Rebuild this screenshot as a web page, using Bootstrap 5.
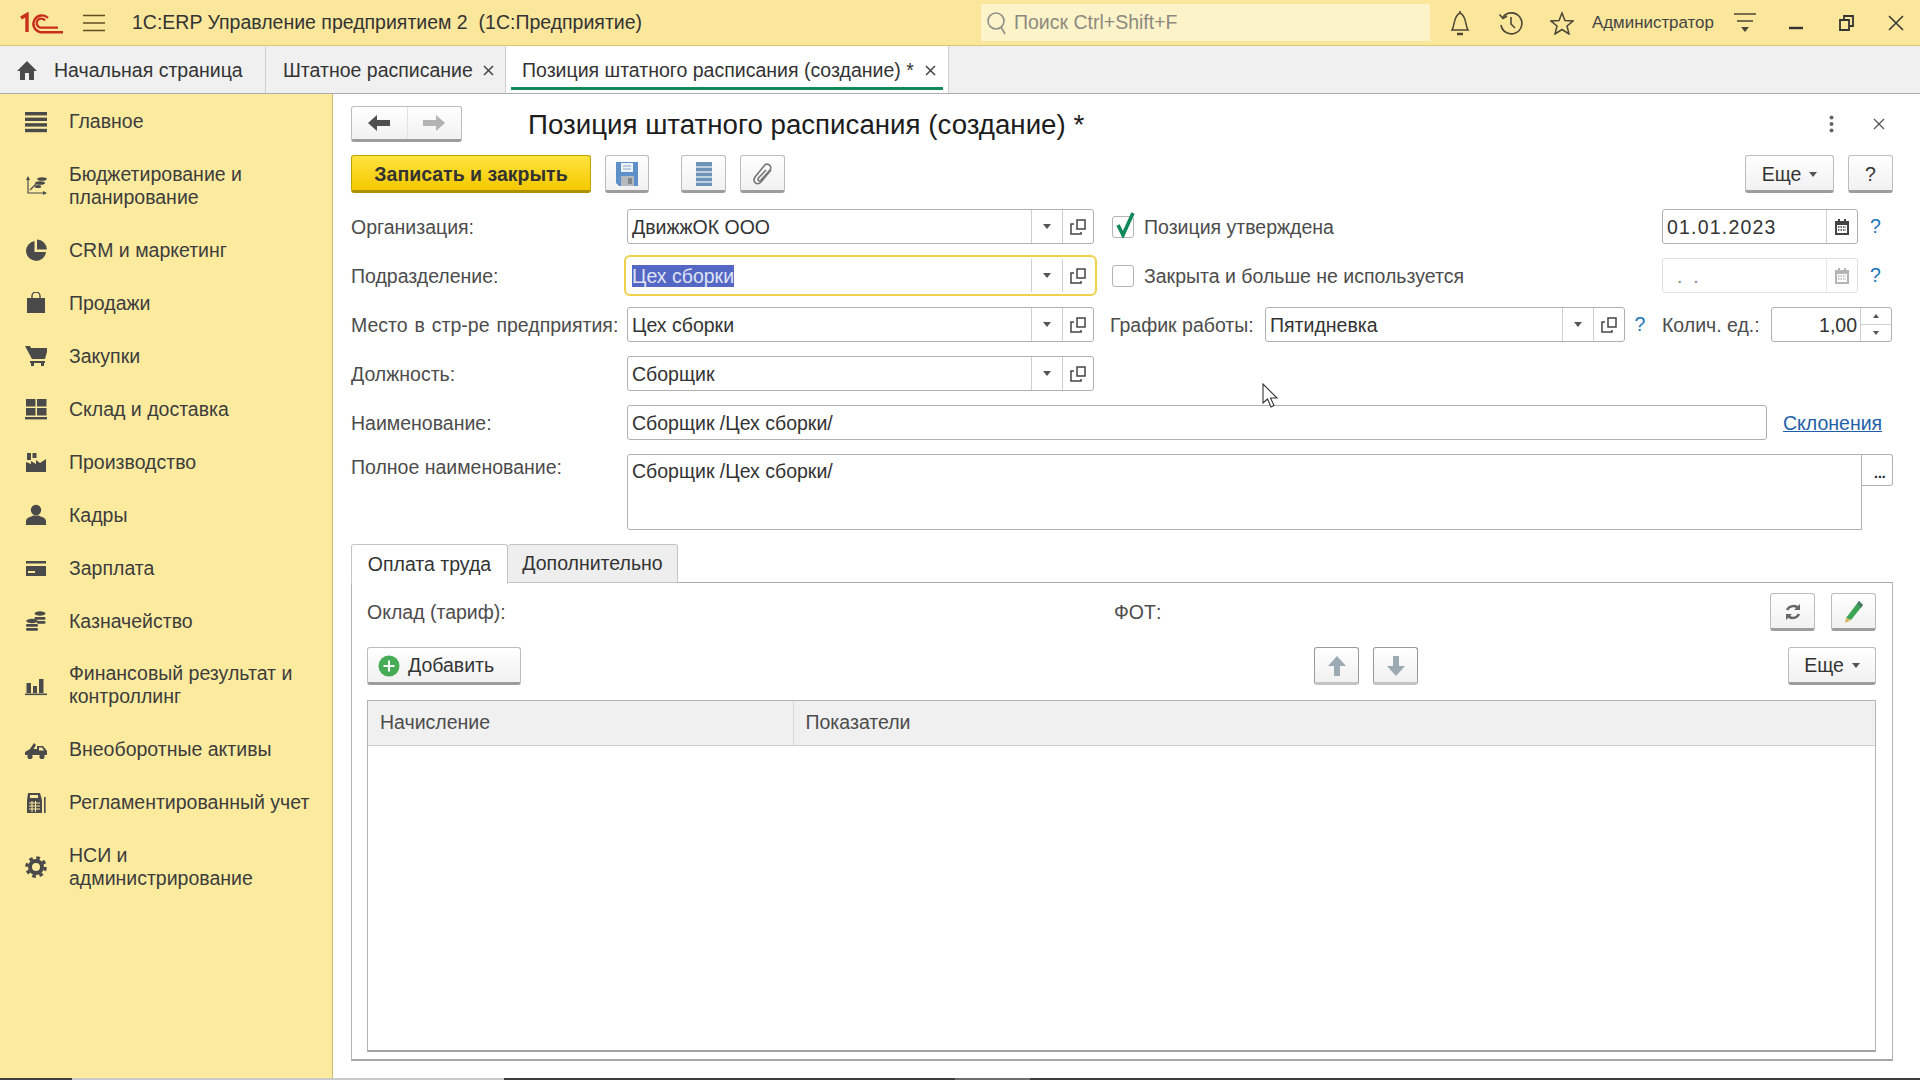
<!DOCTYPE html>
<html lang="ru">
<head>
    <meta charset="UTF-8">
    <title>Позиция штатного расписания</title>
    <link href="https://cdn.jsdelivr.net/npm/bootstrap@5.3.0/dist/css/bootstrap.min.css" rel="stylesheet">
    <style>
        html, body { height: 100%; }
        body { font-family: "Liberation Sans", Arial, sans-serif; font-size: 19.5px; line-height: 23px; color: #333; overflow: hidden; background: #fff; }
        svg { display: block; flex: none; }

        /* верхняя панель */
        .top-bar { height: 46px; flex: none; background: #fbe79c; border-bottom: 1px solid #dcc873; }
        .top-left { width: 981px; }
        .top-logo { margin-left: 20px; }
        .top-search { width: 449px; height: 37px; background: #fdf3c9; color: #8c8a80; padding-left: 4px; gap: 7px; }
        .top-cell { width: 51px; height: 45px; }
        .top-user { width: 132px; padding-left: 5px; font-size: 16.9px; white-space: nowrap; color: #444; }

        /* вкладки */
        .app-tabs { height: 48px; flex: none; background: #f0f0f0; border-bottom: 1px solid #ababab; }
        .app-tab { height: 47px; padding-top: 2px; color: #333; border-right: 1px solid #cfcfcf; white-space: nowrap; }
        .app-tab.active { background: #fff; position: relative; }
        .app-tab.active::after { content: ""; position: absolute; left: 5px; right: 5px; bottom: 3px; height: 3px; background: #128a5c; }
        .tab-home { width: 266px; padding-left: 17px; gap: 17px; }
        .tab-list { width: 240px; padding-left: 17px; gap: 10px; }
        .tab-form { width: 443px; padding-left: 16px; gap: 11px; }

        /* меню */
        .side { width: 333px; flex: none; background: #fceb9f; border-right: 1px solid #cdbb72; }
        .side-item { padding: 16px 8px 14px 25px; gap: 22px; color: #3c3c3c; }
        .side-item.two { padding-top: 15.5px; padding-bottom: 14px; }
        .side-item svg { width: 22px; height: 22px; }

        /* форма */
        .form-area { padding: 12px 27px 0 18px; min-width: 0; }
        .btn-1c { height: 38px; padding: 2px 0 0; font-size: 19.5px; line-height: 23px; color: #333; background: linear-gradient(#fff, #f1f1f1); border: 1px solid #bcbcbc; border-bottom: 3px solid #9d9d9d; border-radius: 3px; }
        .btn-1c:disabled { opacity: 1; color: #999; border-bottom-color: #c4c4c4; }
        .btn-main { width: 240px; font-weight: 700; background: linear-gradient(#ffe43f, #f4c800); border-color: #c4a300; border-bottom-color: #ad9000; }
        .btn-icon { width: 45px; }
        .btn-more { width: 89px; gap: 8px; }
        .nav-pair { width: 111px; height: 36px; padding: 0; }
        .nav-pair .half { width: 55px; height: 100%; }
        .nav-pair .half + .half { border-left: 1px solid #e2e2e2; }
        .form-title { margin-left: 66px; padding-top: 2px; font-size: 27.7px; line-height: 36px; color: #1c1c1c; white-space: nowrap; }
        .f-row { height: 35px; margin-top: 14px; }
        .f-label { width: 276px; flex: none; padding-top: 2px; color: #4c4c4c; white-space: nowrap; }
        .f-wide { word-spacing: 1.5px; }
        .f-text { padding-top: 2px; color: #4c4c4c; white-space: nowrap; }
        .fld { height: 35px; border: 1px solid #b0b0b0; border-radius: 3px; background: #fff; padding: 0; color: #333; font-size: 19.5px; line-height: 23px; }
        .fld .txt { flex: 1 1 auto; padding: 2px 4px 0; white-space: nowrap; overflow: hidden; }
        .fld .cell { width: 31px; flex: none; height: 100%; border-left: 1px solid #cfcfcf; }
        .w-main { width: 467px; flex: none; }
        .fld.focused { outline: 2px solid #f0d24a; outline-offset: 1px; border-color: #fff; }
        .sel { background: #5567c4; color: #dfe3f4; }
        .fld.off { border-color: #e0e0e0; color: #888; }
        .date-txt { letter-spacing: 1.2px; }
        .check { width: 22px; height: 22px; border: 1px solid #b4b4b4; border-radius: 3px; position: relative; }
        .check svg { position: absolute; left: 0; top: -7px; }
        .hint { color: #1a76b8; font-weight: 400; text-align: center; }
        .arrow-down { width: 0; height: 0; border: 4px solid transparent; border-top: 5px solid #555; border-bottom: 0; }
        .spin { width: 31px; flex: none; height: 100%; border-left: 1px solid #cfcfcf; }
        .spin div { flex: 1; border-bottom: 1px solid #cfcfcf; }
        .spin div:last-child { border-bottom: 0; }
        .link-1c { color: #1f5fa8; text-decoration: underline; padding-top: 2px; }
        .fld-memo { height: 76px; align-items: flex-start; border-top-right-radius: 0; border-bottom-right-radius: 0; }
        .fld-memo .txt { padding-top: 5px; }
        .btn-dots { width: 31px; height: 32px; background: #fff; border: 1px solid #b0b0b0; border-left: 0; border-radius: 0 3px 3px 0; font-weight: 700; font-size: 14px; line-height: 30px; padding-top: 3px; }

        /* нижняя панель вкладок */
        .page-tabs { margin-top: 14px; height: 39px; border-bottom: 1px solid #ababab; }
        .page-tab { height: 39px; border: 1px solid #c4c4c4; border-radius: 3px 3px 0 0; color: #333; padding: 0; }
        .page-tab.active { width: 157px; background: #fff; border-bottom-color: #fff; margin-bottom: -1px; height: 40px; }
        .page-tab.other { width: 170px; background: #eee; border-left: 0; }
        .panel-1c { height: 478px; padding: 9px 16px 0 15px; border: 1px solid #b4b4b4; border-top: 0; border-bottom: 2px solid #a8a8a8; }
        .row-1c { height: 39px; }
        .row-label { color: #4c4c4c; padding-top: 2px; }
        .tbl-wrap { height: 352px; margin-top: 15px; border: 1px solid #b4b4b4; border-bottom: 2px solid #a4a4a4; }
        .tbl-wrap table { table-layout: fixed; margin: 0; font-size: 19.5px; }
        .tbl-wrap th { height: 44px; background: #f0f0f0; font-weight: 400; color: #4c4c4c; padding: 0 12px; vertical-align: middle; border-bottom: 1px solid #cfcfcf; }
        .tbl-wrap th + th { border-left: 1px solid #d8d8d8; }

        .strip { height: 2px; flex: none; background: #3f3f3f; }
        .strip span { display: block; height: 2px; }
        .mouse { position: absolute; left: 1262px; top: 383px; }
    </style>
</head>
<body class="d-flex flex-column position-relative">

<header class="top-bar d-flex align-items-center">
    <div class="top-left d-flex align-items-center">
        <svg class="top-logo" width="43" height="22" viewBox="0 0 43 22" fill="none" stroke="#c9301c" stroke-width="2.4">
            <path d="M1 6 L7 2.5 V20" stroke-width="3.4"/>
            <path d="M28 6 A8.5 8.5 0 1 0 20 20.2 H43"/>
            <path d="M25 8.5 A4.6 4.6 0 1 0 20 15.6 H38"/>
        </svg>
        <svg style="margin-left:20px" width="22" height="18" viewBox="0 0 22 18" stroke="#5f4e22" stroke-width="1.6">
            <path d="M0 1.5 H22 M0 9 H22 M0 16.5 H22"/>
        </svg>
        <div style="margin-left:27px;white-space:pre">1С:ERP Управление предприятием 2  (1С:Предприятие)</div>
    </div>
    <div class="top-search d-flex align-items-center">
        <svg width="22" height="26" viewBox="0 0 22 26" fill="none" stroke="#8f8f88" stroke-width="1.6">
            <circle cx="11" cy="11" r="8"/><path d="M16 17 L20 24"/>
        </svg>
        <span>Поиск Ctrl+Shift+F</span>
    </div>
    <div class="top-cell d-flex align-items-center justify-content-center" style="margin-left:4px">
        <svg width="24" height="26" viewBox="0 0 24 26" fill="none" stroke="#4b4636" stroke-width="1.5">
            <path d="M4 20 C7 16 5 6 12 3 C19 6 17 16 20 20 Z"/><path d="M12 1 V3"/><path d="M9 24 H15" stroke-width="2.5"/>
        </svg>
    </div>
    <div class="top-cell d-flex align-items-center justify-content-center">
        <svg width="25" height="26" viewBox="0 0 25 26" fill="none" stroke="#4b4636" stroke-width="1.6">
            <path d="M5 7 A10.5 10.5 0 1 1 3 15"/><path d="M1.5 4.5 L5 8.5 L9 6"/><path d="M13 7 V14 L17 18"/>
        </svg>
    </div>
    <div class="top-cell d-flex align-items-center justify-content-center">
        <svg width="24" height="24" viewBox="0 0 24 24" fill="none" stroke="#4b4636" stroke-width="1.5">
            <path d="M12 2 L15 9.5 L23 10 L17 15 L19 23 L12 18.5 L5 23 L7 15 L1 10 L9 9.5 Z"/>
        </svg>
    </div>
    <div class="top-user">Администратор</div>
    <div class="top-cell d-flex align-items-center justify-content-center">
        <svg width="22" height="22" viewBox="0 0 22 22" fill="#4b4636" stroke="#4b4636" stroke-width="1.5">
            <path d="M0 2 H22 M3 9 H19" fill="none"/><path d="M7 15 H15 L11 20 Z" stroke="none"/>
        </svg>
    </div>
    <div class="top-cell d-flex align-items-center justify-content-center">
        <svg width="14" height="14" viewBox="0 0 14 14" stroke="#333" stroke-width="2.4"><path d="M0 12 H14"/></svg>
    </div>
    <div class="top-cell d-flex align-items-center justify-content-center">
        <svg width="15" height="16" viewBox="0 0 15 16" fill="none" stroke="#333" stroke-width="1.8">
            <path d="M1 5 H10 V15 H1 Z"/><path d="M5 4 V1 H14 V11 H11"/>
        </svg>
    </div>
    <div class="top-cell d-flex align-items-center justify-content-center" style="width:48px">
        <svg width="16" height="16" viewBox="0 0 16 16" stroke="#333" stroke-width="1.5"><path d="M1 1 L15 15 M15 1 L1 15"/></svg>
    </div>
</header>

<nav class="app-tabs d-flex">
    <a class="app-tab tab-home d-flex align-items-center text-decoration-none">
        <svg width="20" height="19" viewBox="0 0 20 19" fill="#4a4a4a"><path d="M10 0 L20 10 H17 V19 H12 V12 H8 V19 H3 V10 H0 Z"/></svg>
        <span>Начальная страница</span>
    </a>
    <a class="app-tab tab-list d-flex align-items-center text-decoration-none">
        <span>Штатное расписание</span>
        <svg width="11" height="11" viewBox="0 0 11 11" stroke="#444" stroke-width="1.5"><path d="M1 1 L10 10 M10 1 L1 10"/></svg>
    </a>
    <a class="app-tab tab-form active d-flex align-items-center text-decoration-none">
        <span>Позиция штатного расписания (создание) *</span>
        <svg width="11" height="11" viewBox="0 0 11 11" stroke="#444" stroke-width="1.5"><path d="M1 1 L10 10 M10 1 L1 10"/></svg>
    </a>
</nav>

<div class="d-flex flex-grow-1" style="min-height:0">
    <aside class="side">
        <div class="side-item d-flex align-items-center">
            <svg viewBox="0 0 22 22" fill="#4a4a4a"><rect y="1" width="22" height="3.4"/><rect y="6.6" width="22" height="3.4"/><rect y="12.2" width="22" height="3.4"/><rect y="17.8" width="22" height="3.4"/></svg>
            <span>Главное</span>
        </div>
        <div class="side-item two d-flex align-items-center">
            <svg viewBox="0 0 22 22" fill="#4a4a4a"><path d="M3 4 V18 H20" fill="none" stroke="#4a4a4a" stroke-width="1.2"/><path d="M1 5 L3 1 L5 5 Z M18 16 L22 18 L18 20 Z"/><path d="M5 15 L11 9" stroke="#4a4a4a" fill="none" stroke-width="1.2"/><ellipse cx="17" cy="4" rx="4.800" ry="1.800"/><ellipse cx="15" cy="8" rx="5" ry="1.800"/><ellipse cx="13" cy="11.500" rx="3.200" ry="1.500"/></svg>
            <span>Бюджетирование и<br>планирование</span>
        </div>
        <div class="side-item d-flex align-items-center">
            <svg viewBox="0 0 22 22" fill="#4a4a4a"><path d="M9.5 2 A10 10 0 1 0 21 13 H9.5 Z"/><path d="M12 0.5 A10 10 0 0 1 21.8 10.5 H12 Z"/></svg>
            <span>CRM и маркетинг</span>
        </div>
        <div class="side-item d-flex align-items-center">
            <svg viewBox="0 0 22 22" fill="#4a4a4a"><path d="M2 6 H20 V21 H2 Z"/><path d="M7 8 V4 A4 4 0 0 1 15 4 V8" fill="none" stroke="#4a4a4a" stroke-width="1.4"/></svg>
            <span>Продажи</span>
        </div>
        <div class="side-item d-flex align-items-center">
            <svg viewBox="0 0 22 22" fill="#4a4a4a"><path d="M0 1 H5 L6 3 H23 L20 14 H7 Z"/><rect x="5" y="16" width="15" height="2"/><rect x="6" y="18" width="3" height="3"/><rect x="16" y="18" width="3" height="3"/></svg>
            <span>Закупки</span>
        </div>
        <div class="side-item d-flex align-items-center">
            <svg viewBox="0 0 22 22" fill="#4a4a4a"><rect x="1" y="1" width="9.5" height="7.5"/><rect x="12" y="1" width="9.5" height="7.5"/><rect x="1" y="10" width="9.5" height="7.5"/><rect x="12" y="10" width="9.5" height="7.5"/><rect y="19" width="22" height="2.4"/></svg>
            <span>Склад и доставка</span>
        </div>
        <div class="side-item d-flex align-items-center">
            <svg viewBox="0 0 22 22" fill="#4a4a4a"><path d="M1 21 V11 L6 13 V10 L11 13 V9 L15 12 L21 8 V21 Z"/><rect x="2" y="2" width="4" height="7"/><rect x="7.5" y="2" width="4" height="5"/></svg>
            <span>Производство</span>
        </div>
        <div class="side-item d-flex align-items-center">
            <svg viewBox="0 0 22 22" fill="#4a4a4a"><circle cx="11" cy="6" r="5.2"/><path d="M1 21 V17 C1 13 7 13 8 11.5 H14 C15 13 21 13 21 17 V21 Z"/></svg>
            <span>Кадры</span>
        </div>
        <div class="side-item d-flex align-items-center">
            <svg viewBox="0 0 22 22" fill="#4a4a4a"><path d="M1 4 H21 V6.5 H1 Z"/><path d="M1 9 H21 V19 H1 Z M3 14 V16 H10 V14 Z"/></svg>
            <span>Зарплата</span>
        </div>
        <div class="side-item d-flex align-items-center">
            <svg viewBox="0 0 22 22" fill="#4a4a4a"><ellipse cx="15" cy="3.5" rx="5.5" ry="2.2"/><rect x="9.5" y="7" width="11" height="2.8" rx="1.2"/><rect x="12" y="11" width="8.5" height="2.8" rx="1.2"/><ellipse cx="7" cy="11" rx="5.8" ry="2.2"/><rect x="1" y="14" width="12" height="2.8" rx="1.2"/><rect x="1" y="18" width="12" height="2.8" rx="1.2"/></svg>
            <span>Казначейство</span>
        </div>
        <div class="side-item two d-flex align-items-center">
            <svg viewBox="0 0 22 22" fill="#4a4a4a"><rect x="1.5" y="9" width="4.5" height="10"/><rect x="8" y="12" width="4" height="7"/><rect x="14" y="5" width="4.5" height="14"/><rect y="19.5" width="22" height="1.6"/></svg>
            <span>Финансовый результат и<br>контроллинг</span>
        </div>
        <div class="side-item d-flex align-items-center">
            <svg viewBox="0 0 22 22" fill="#4a4a4a"><path d="M0 16 V13 L5 10 L9 4 L11 6 L8.500 10 H12 V7 H18 L22 12 V16 Z"/><path d="M14 8.500 H17 L19 11.500 H14 Z" fill="#fceb9f"/><circle cx="5" cy="17.500" r="2.600"/><circle cx="17" cy="17.500" r="2.600"/></svg>
            <span>Внеоборотные активы</span>
        </div>
        <div class="side-item d-flex align-items-center">
            <svg viewBox="0 0 22 22" fill="#4a4a4a"><path d="M2 8 L3 1 H15 L17 8 V21 H2 Z"/><rect x="5" y="3" width="8" height="3" fill="#fceb9f"/><path d="M4 11 H15 M4 14 H15 M4 17 H15 M7 9 V20 M10.5 9 V20" stroke="#fceb9f" stroke-width="1"/><rect x="19" y="5" width="1.6" height="16"/></svg>
            <span>Регламентированный учет</span>
        </div>
        <div class="side-item two d-flex align-items-center">
            <svg viewBox="0 0 22 22" fill="none" stroke="#4a4a4a"><circle cx="11" cy="11" r="6" stroke-width="4"/><circle cx="11" cy="11" r="9.2" stroke-width="3.2" stroke-dasharray="3.6 3.63"/></svg>
            <span>НСИ и<br>администрирование</span>
        </div>
    </aside>

    <main class="form-area flex-grow-1">
        <div class="d-flex align-items-center" style="height:36px">
            <div class="nav-pair btn-1c d-flex">
                <span class="half d-flex align-items-center justify-content-center">
                    <svg width="22" height="16" viewBox="0 0 22 16" fill="#4f4f4f"><path d="M9 0 V5 H22 V11 H9 V16 L0 8 Z"/></svg>
                </span>
                <span class="half d-flex align-items-center justify-content-center">
                    <svg width="22" height="16" viewBox="0 0 22 16" fill="#b3b3b3"><path d="M13 0 V5 H0 V11 H13 V16 L22 8 Z"/></svg>
                </span>
            </div>
            <h1 class="form-title mb-0 fw-normal">Позиция штатного расписания (создание) *</h1>
            <svg class="ms-auto" width="5" height="18" viewBox="0 0 5 18" fill="#666"><circle cx="2.5" cy="2.5" r="2"/><circle cx="2.5" cy="9" r="2"/><circle cx="2.5" cy="15.500" r="2"/></svg>
            <svg style="margin:0 8px 0 39px" width="12" height="12" viewBox="0 0 12 12" stroke="#555" stroke-width="1.3"><path d="M1 1 L11 11 M11 1 L1 11"/></svg>
        </div>

        <div class="d-flex align-items-start" style="margin-top:13px">
            <button class="btn btn-1c btn-main" type="button">Записать и закрыть</button>
            <button class="btn btn-1c d-flex align-items-center justify-content-center" style="width:44px;margin-left:14px" type="button">
                <svg width="22" height="24" viewBox="0 0 22 24"><path d="M0 0 H22 V24 H3 L0 21 Z" fill="#5d8fc9"/><rect x="5" y="1" width="12" height="9" fill="#eef3f8"/><path d="M7 4 H15 M7 7 H15" stroke="#8aa6c6"/><rect x="5" y="14" width="13" height="10" fill="#b4b9bd"/><rect x="12" y="16" width="4" height="6" fill="#7f868c"/></svg>
            </button>
            <button class="btn btn-1c btn-icon d-flex align-items-center justify-content-center" style="margin-left:32px" type="button">
                <svg width="16" height="24" viewBox="0 0 16 24"><rect width="16" height="24" fill="#6d93b8"/><path d="M0 5 H16 M0 10 H16 M0 15 H16 M0 20 H16" stroke="#dbe6f0" stroke-width="1.3"/></svg>
            </button>
            <button class="btn btn-1c btn-icon d-flex align-items-center justify-content-center" style="margin-left:14px" type="button">
                <svg width="22" height="24" viewBox="0 0 22 24" fill="none" stroke="#777" stroke-width="1.6"><path d="M19 8 L9 20 C5 24 0 20 3 15 L12 4 C15 0 21 4 18 8 L9 18 C7 20 5 18 6.500 16 L14 8"/></svg>
            </button>
            <button class="btn btn-1c btn-more ms-auto d-flex align-items-center justify-content-center" type="button">
                <span>Еще</span><span class="arrow-down"></span>
            </button>
            <button class="btn btn-1c btn-icon" style="margin-left:14px" type="button">?</button>
        </div>

        <div class="f-row d-flex align-items-center" style="margin-top:16px">
            <div class="f-label">Организация:</div>
            <div class="fld w-main d-flex align-items-center">
                <div class="txt">ДвижжОК ООО</div>
                <div class="cell d-flex align-items-center justify-content-center"><span class="arrow-down"></span></div>
                <div class="cell d-flex align-items-center justify-content-center"><svg width="16" height="16" viewBox="0 0 16 16" fill="none" stroke="#444" stroke-width="1.5"><path d="M7 1 H15 V10 H7 Z"/><path d="M4 5 H1 V15 H11 V13"/></svg></div>
            </div>
            <div class="check" style="margin-left:18px">
                <svg width="24" height="28" viewBox="0 0 24 28" fill="none" stroke="#10885a" stroke-width="3.6"><path d="M5 15 L10 25 L20 3"/></svg>
            </div>
            <div class="f-text" style="margin-left:10px">Позиция утверждена</div>
            <div class="fld d-flex align-items-center ms-auto" style="width:196px">
                <div class="txt date-txt">01.01.2023</div>
                <div class="cell d-flex align-items-center justify-content-center"><svg width="14" height="16" viewBox="0 0 14 16" fill="#444"><path d="M0 2 H14 V16 H0 Z M2 6 V14 H12 V6 Z"/><rect x="3" y="0" width="2" height="3"/><rect x="9" y="0" width="2" height="3"/><path d="M3 8 H11 M3 11 H11" stroke="#444" stroke-width="1.300" stroke-dasharray="1.500 1"/></svg></div>
            </div>
            <div class="hint" style="width:35px">?</div>
        </div>

        <div class="f-row d-flex align-items-center">
            <div class="f-label">Подразделение:</div>
            <div class="fld focused w-main d-flex align-items-center">
                <div class="txt"><span class="sel">Цех сборки</span></div>
                <div class="cell d-flex align-items-center justify-content-center"><span class="arrow-down"></span></div>
                <div class="cell d-flex align-items-center justify-content-center"><svg width="16" height="16" viewBox="0 0 16 16" fill="none" stroke="#444" stroke-width="1.5"><path d="M7 1 H15 V10 H7 Z"/><path d="M4 5 H1 V15 H11 V13"/></svg></div>
            </div>
            <div class="check" style="margin-left:18px"></div>
            <div class="f-text" style="margin-left:10px">Закрыта и больше не используется</div>
            <div class="fld off d-flex align-items-center ms-auto" style="width:196px">
                <div class="txt" style="padding-left:14px">. &nbsp;.</div>
                <div class="cell d-flex align-items-center justify-content-center" style="border-left-color:#e8e8e8"><svg width="14" height="16" viewBox="0 0 14 16" fill="#b5b5b5"><path d="M0 2 H14 V16 H0 Z M2 6 V14 H12 V6 Z"/><rect x="3" y="0" width="2" height="3"/><rect x="9" y="0" width="2" height="3"/><path d="M3 8 H11 M3 11 H11" stroke="#b5b5b5" stroke-width="1.300" stroke-dasharray="1.500 1"/></svg></div>
            </div>
            <div class="hint" style="width:35px">?</div>
        </div>

        <div class="f-row d-flex align-items-center">
            <div class="f-label f-wide">Место в стр-ре предприятия:</div>
            <div class="fld w-main d-flex align-items-center">
                <div class="txt">Цех сборки</div>
                <div class="cell d-flex align-items-center justify-content-center"><span class="arrow-down"></span></div>
                <div class="cell d-flex align-items-center justify-content-center"><svg width="16" height="16" viewBox="0 0 16 16" fill="none" stroke="#444" stroke-width="1.5"><path d="M7 1 H15 V10 H7 Z"/><path d="M4 5 H1 V15 H11 V13"/></svg></div>
            </div>
            <div class="f-text" style="margin-left:16px;width:155px">График работы:</div>
            <div class="fld d-flex align-items-center" style="width:360px">
                <div class="txt">Пятидневка</div>
                <div class="cell d-flex align-items-center justify-content-center"><span class="arrow-down"></span></div>
                <div class="cell d-flex align-items-center justify-content-center"><svg width="16" height="16" viewBox="0 0 16 16" fill="none" stroke="#444" stroke-width="1.5"><path d="M7 1 H15 V10 H7 Z"/><path d="M4 5 H1 V15 H11 V13"/></svg></div>
            </div>
            <div class="hint" style="width:30px">?</div>
            <div class="f-text" style="margin-left:7px;width:109px">Колич. ед.:</div>
            <div class="fld d-flex align-items-center" style="width:121px">
                <div class="txt text-end" style="padding-right:3px">1,00</div>
                <div class="spin d-flex flex-column">
                    <div class="d-flex align-items-center justify-content-center"><span class="arrow-down" style="transform:rotate(180deg);border-width:3px;border-top-width:4px;border-bottom-width:0"></span></div>
                    <div class="d-flex align-items-center justify-content-center"><span class="arrow-down" style="border-width:3px;border-top-width:4px;border-bottom-width:0"></span></div>
                </div>
            </div>
        </div>

        <div class="f-row d-flex align-items-center">
            <div class="f-label">Должность:</div>
            <div class="fld w-main d-flex align-items-center">
                <div class="txt">Сборщик</div>
                <div class="cell d-flex align-items-center justify-content-center"><span class="arrow-down"></span></div>
                <div class="cell d-flex align-items-center justify-content-center"><svg width="16" height="16" viewBox="0 0 16 16" fill="none" stroke="#444" stroke-width="1.5"><path d="M7 1 H15 V10 H7 Z"/><path d="M4 5 H1 V15 H11 V13"/></svg></div>
            </div>
        </div>

        <div class="f-row d-flex align-items-center">
            <div class="f-label">Наименование:</div>
            <div class="fld flex-grow-1 d-flex align-items-center">
                <div class="txt">Сборщик /Цех сборки/</div>
            </div>
            <a class="link-1c" style="width:110px;margin-left:16px">Склонения</a>
        </div>

        <div class="d-flex align-items-start" style="margin-top:14px">
            <div class="f-label">Полное наименование:</div>
            <div class="fld fld-memo flex-grow-1 d-flex">
                <div class="txt">Сборщик /Цех сборки/</div>
            </div>
            <button class="btn btn-dots" type="button">...</button>
        </div>

        <div class="page-tabs d-flex">
            <button class="page-tab active" type="button">Оплата труда</button>
            <button class="page-tab other" type="button">Дополнительно</button>
        </div>
        <div class="panel-1c">
            <div class="row-1c d-flex align-items-center">
                <div class="row-label" style="width:747px">Оклад (тариф):</div>
                <div class="row-label">ФОТ:</div>
                <button class="btn btn-1c btn-icon ms-auto d-flex align-items-center justify-content-center" type="button">
                    <svg width="18" height="18" viewBox="0 0 18 18" fill="none" stroke="#666" stroke-width="2.400"><path d="M15 6 A7 7 0 0 0 3 7"/><path d="M3 12 A7 7 0 0 0 15 11"/><path d="M16 1 V7 H10 Z M2 17 V11 H8 Z" fill="#666" stroke="none"/></svg>
                </button>
                <button class="btn btn-1c btn-icon d-flex align-items-center justify-content-center" style="margin-left:16px" type="button">
                    <svg width="20" height="24" viewBox="0 0 20 24"><path d="M15 1 L19 5 L7 20 L2 18 Z" fill="#3aa655"/><path d="M15 1 L19 5 L17 8 L13 4 Z" fill="#4d7a6a"/><path d="M2 18 L7 20 L1 23 Z" fill="#d9b25a"/></svg>
                </button>
            </div>
            <div class="row-1c d-flex align-items-center" style="margin-top:15px">
                <button class="btn btn-1c d-flex align-items-center" style="width:154px;padding-left:10px;gap:8px" type="button">
                    <svg width="22" height="22" viewBox="0 0 22 22"><circle cx="11" cy="11" r="10.500" fill="#45ab55"/><path d="M11 5.500 V16.500 M5.500 11 H16.500" stroke="#fff" stroke-width="2"/></svg>
                    <span>Добавить</span>
                </button>
                <button class="btn btn-1c btn-icon d-flex align-items-center justify-content-center" style="margin-left:793px" type="button" disabled>
                    <svg width="18" height="20" viewBox="0 0 18 20" fill="#9cabb3"><path d="M9 0 L18 10 H12 V20 H6 V10 H0 Z"/></svg>
                </button>
                <button class="btn btn-1c btn-icon d-flex align-items-center justify-content-center" style="margin-left:14px" type="button" disabled>
                    <svg width="18" height="20" viewBox="0 0 18 20" fill="#9cabb3"><path d="M9 20 L18 10 H12 V0 H6 V10 H0 Z"/></svg>
                </button>
                <button class="btn btn-1c btn-more ms-auto d-flex align-items-center justify-content-center" style="width:88px" type="button">
                    <span>Еще</span><span class="arrow-down"></span>
                </button>
            </div>
            <div class="tbl-wrap">
                <table class="table table-borderless">
                    <thead>
                        <tr><th style="width:425px">Начисление</th><th>Показатели</th></tr>
                    </thead>
                </table>
            </div>
        </div>
    </main>
</div>

<footer class="strip d-flex">
    <span style="width:72px"></span>
    <span style="width:432px;background:#c9c9c9"></span>
    <span style="width:451px"></span>
    <span style="width:75px;background:#6e6e6e"></span>
</footer>

<svg class="mouse" width="20" height="26" viewBox="0 0 20 26" fill="#fff" stroke="#333" stroke-width="1.100"><path d="M1 1 V20 L5.500 16 L9 24 L12 22.500 L8.500 15 L15 15 Z"/></svg>

</body>
</html>
